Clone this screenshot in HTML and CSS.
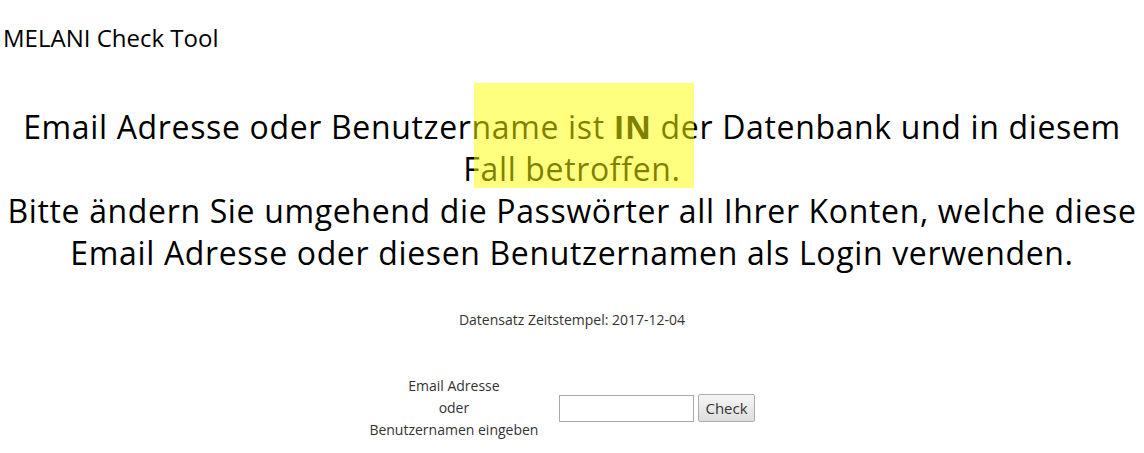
FILE: index.html
```html
<!DOCTYPE html>
<html lang="de">
<head>
    <meta charset="UTF-8">
    <title>MELANI Check Tool</title>
    <link rel="stylesheet" href="styles.css">
</head>
<body>
    <header class="site-title">MELANI Check Tool</header>

    <div class="result">
        <p class="message">
            Email Adresse oder Benutzername ist <b>IN</b> der Datenbank und in diesem<br>
            Fall betroffen.
        </p>
        <p class="message">
            Bitte ändern Sie umgehend die Passwörter all Ihrer Konten, welche diese<br>
            Email Adresse oder diesen Benutzernamen als Login verwenden.
        </p>
        <div class="highlight"></div>
    </div>

    <p class="timestamp">Datensatz Zeitstempel: 2017-12-04</p>

    <form class="check-form">
        <label class="check-label" for="login">Email Adresse<br>oder<br>Benutzernamen eingeben</label>
        <input type="text" id="login" class="check-input">
        <button type="submit" class="btn-check">Check</button>
    </form>
</body>
</html>
```

FILE: styles.css
```css
body {
    font-family: "Open Sans", Arial, sans-serif;
    color: #000000;
    background-color: #ffffff;
    margin: 0;
    padding: 0 5px;
}

.site-title {
    font-size: 24px;
    padding-top: 22px;
    padding-left: 0;
    line-height: 32px;
    margin-left: -2px;
}

.result {
    position: relative;
    margin-top: 52px;
    text-align: center;
}

.message {
    font-size: 32px;
    letter-spacing: 0.65px;
    line-height: 42px;
    margin: 0;
    white-space: nowrap;
}

/* Markierung ueber dem Text */
.highlight {
    position: absolute;
    left: 469px;
    top: -23px;
    width: 220px;
    height: 105px;
    background-color: rgba(255, 255, 0, 0.5);
}

.timestamp {
    text-align: center;
    font-size: 14px;
    color: #333333;
    margin: 36px 0 0 0;
}

.check-form {
    display: flex;
    justify-content: center;
    align-items: center;
    gap: 21px;
    margin-top: 46px;
    margin-right: 20px;
}

.check-label {
    font-size: 14px;
    line-height: 22px;
    color: #333333;
    text-align: center;
}

.check-input {
    width: 129px;
    height: 21px;
    border: 1px solid #a9a9a9;
    padding: 2px;
    margin: 0;
}

.btn-check {
    font-family: "Open Sans", Arial, sans-serif;
    font-size: 15px;
    color: #333333;
    height: 28px;
    padding: 0 6px;
    margin-left: -17px;
    border: 1px solid #adadad;
    border-radius: 2px;
    background: linear-gradient(#f6f6f6, #dddddd);
}
```
